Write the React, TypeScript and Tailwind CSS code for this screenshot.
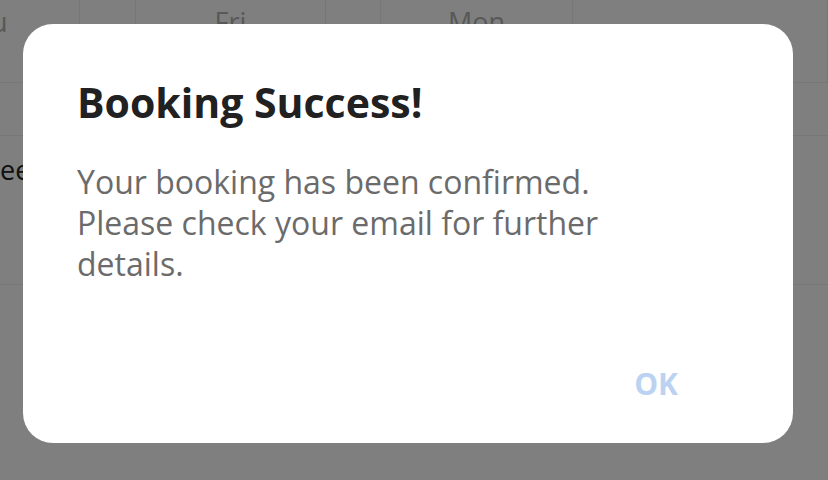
import React from "react";

export default function App() {
  const cols = [80, 56, 190, 55, 192, 255];
  const headers = ["Thu", "", "Fri", "", "Mon", ""];
  return (
    <div className="relative h-[480px] w-[828px] overflow-hidden bg-white" style={{ fontFamily: "'Open Sans', Roboto, sans-serif" }}>
      {/* background table */}
      <div className="flex flex-col">
        <div className="flex h-[83px] border-b border-[#eeeeee]">
          {cols.map((w, i) => (
            <div key={i} className="flex justify-center overflow-hidden border-r border-[#eeeeee] pt-[2px] text-[27px] text-[#b0b0b0]" style={{ width: w }}>
              {i === 0 ? <span className="-ml-[112px]">Thu</span> : headers[i]}
            </div>
          ))}
        </div>
        <div className="h-[53px] border-b border-[#eeeeee]" />
        <div className="flex h-[149px] items-start border-b border-[#eeeeee] pt-[14px]">
          <span className="text-[27px] font-medium text-[#222222]">ee</span>
        </div>
      </div>

      {/* overlay */}
      <div className="absolute inset-0 bg-black/50 pl-[23px] pt-[24px]">
        <div className="flex h-[419px] w-[770px] flex-col rounded-[30px] bg-white pl-[54px] pr-[115px]">
          <h1 className="mt-[58px] text-[41px] font-bold leading-none text-[#212121]">Booking Success!</h1>
          <p className="mt-[38px] text-[32px] leading-[41px] text-[#6b6b6b]">
            Your booking has been confirmed.
            <br />
            Please check your email for further
            <br />
            details.
          </p>
          <div className="mt-auto mb-[44px] flex justify-end">
            <button className="text-[30px] font-bold leading-none text-[#bcd2f2]">OK</button>
          </div>
        </div>
      </div>
    </div>
  );
}
